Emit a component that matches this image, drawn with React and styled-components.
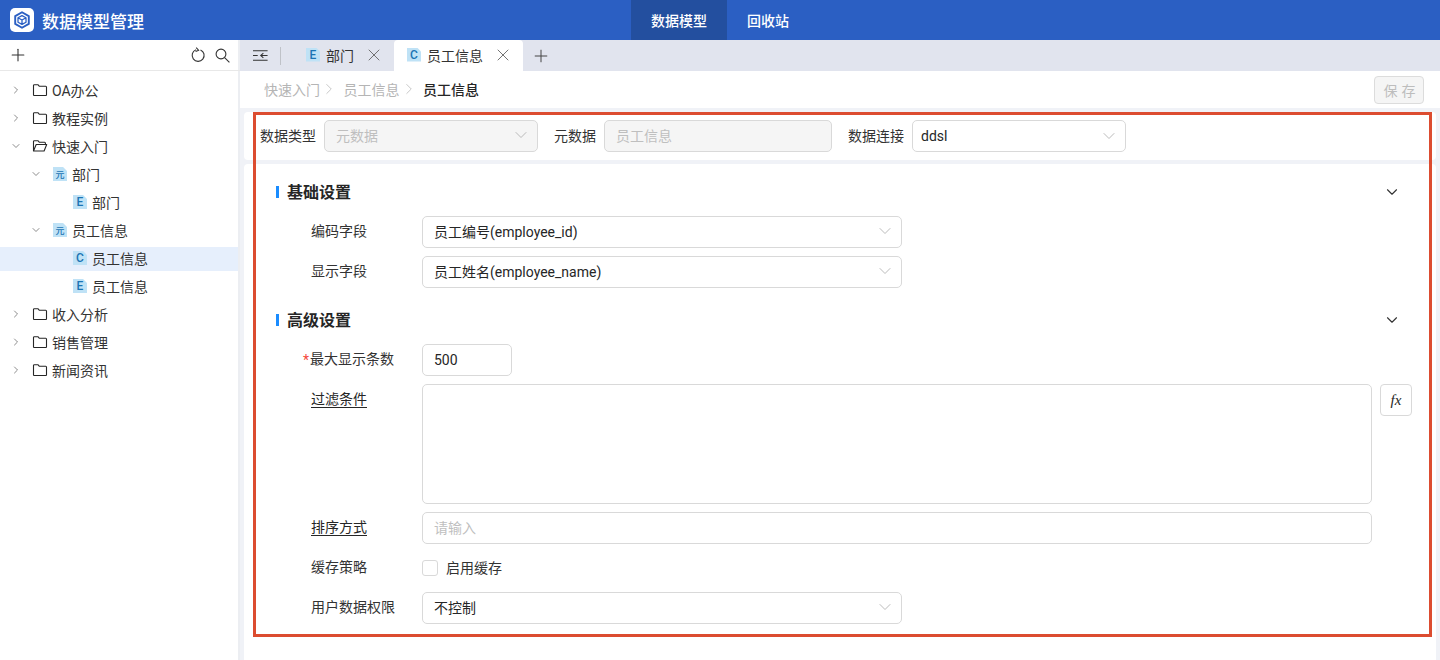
import React from "react";
import styled, { createGlobalStyle } from "styled-components";
import { ChevronDown, ChevronRight, Plus, X } from "lucide-react";

const GlobalStyle = createGlobalStyle`
  html, body { margin: 0; padding: 0; height: 100%; }
  body {
    background: #fff;
    color: #262626;
    font-family: Roboto, "Noto Sans CJK SC", "Noto Sans", sans-serif;
    font-size: 14px;
    overflow: hidden;
  }
  * { box-sizing: border-box; }
`;

const Page = styled.div`
  position: relative;
  width: 1440px;
  height: 660px;
  display: flex;
  flex-direction: column;
  overflow: hidden;
`;

const Header = styled.header`
  height: 40px;
  flex: none;
  display: grid;
  grid-template-columns: 631px auto 1fr;
  background: #2b5fc3;
  color: #fff;
`;

const Brand = styled.div`
  display: flex;
  align-items: center;
  gap: 8px;
  padding-left: 10px;
  font-size: 17px;
  font-weight: 500;
`;

const LogoBox = styled.span`
  width: 24px;
  height: 24px;
  border-radius: 5px;
  background: #fff;
  display: flex;
  align-items: center;
  justify-content: center;
`;

const Nav = styled.nav`
  display: flex;
`;

const NavItem = styled.a`
  width: ${(p) => (p.$active ? "96px" : "82px")};
  height: 40px;
  display: flex;
  align-items: center;
  justify-content: center;
  font-weight: 500;
  background: ${(p) => (p.$active ? "#234f9f" : "transparent")};
`;

const Body = styled.div`
  flex: 1;
  display: flex;
  min-height: 0;
`;

const Sidebar = styled.aside`
  width: 240px;
  flex: none;
  border-right: 2px solid #eceef2;
`;

const SideTools = styled.div`
  height: 31px;
  display: flex;
  align-items: center;
  padding: 0 10px 0 8px;
  border-bottom: 1px solid #e8e8e8;
  margin-right: -2px;
  color: #333;
`;

const Spacer = styled.span`
  flex: 1;
`;

const RefreshWrap = styled.span`
  display: flex;
  margin-right: 9px;
`;

const Tree = styled.ul`
  list-style: none;
  margin: 0;
  padding: 8px 0 0;
`;

const TreeRow = styled.li`
  height: 24px;
  margin-bottom: 4px;
  display: flex;
  align-items: center;
  padding-left: ${(p) => 10 + p.$level * 20}px;
  padding-bottom: 2px;
  background: ${(p) => (p.$selected ? "#e6effc" : "transparent")};
  color: #333;
`;

const Arrow = styled.span`
  width: 12px;
  height: 12px;
  margin-right: ${(p) => (p.$file ? 11 : 10)}px;
  flex: none;
  display: flex;
  align-items: center;
  justify-content: center;
  color: #666;
`;

const TreeLabel = styled.span`
  margin-left: ${(p) => (p.$file ? 5 : 4)}px;
  white-space: nowrap;
`;

const FileBadge = styled.span`
  width: 14px;
  height: 14px;
  flex: none;
  background: #bfe2f6;
  clip-path: polygon(0 0, 72% 0, 100% 28%, 100% 100%, 0 100%);
  color: #1b74b4;
  font-family: ${(p) => (p.$small ? '"Noto Sans CJK SC"' : "Roboto")}, sans-serif;
  font-size: ${(p) => (p.$small ? "9px" : "12px")};
  font-weight: 500;
  line-height: 15px;
  text-align: center;
`;

const Main = styled.main`
  flex: 1;
  min-width: 0;
  display: flex;
  flex-direction: column;
  background: #f0f2f7;
`;

const TabBar = styled.div`
  height: 31px;
  flex: none;
  display: flex;
  background: #e1e4ee;
`;

const Toggle = styled.div`
  width: 41px;
  display: flex;
  align-items: center;
  padding-left: 13px;
  &::after {
    content: "";
    width: 1px;
    height: 18px;
    background: #bfc2c8;
    margin-left: 12px;
  }
`;

const Tab = styled.div`
  height: 31px;
  width: ${(p) => (p.$active ? "129px" : "113px")};
  display: flex;
  align-items: center;
  padding-left: ${(p) => (p.$active ? "13px" : "25px")};
  padding-bottom: 2px;
  background: ${(p) => (p.$active ? "#fff" : "transparent")};
  border-radius: 4px 4px 0 0;
  color: #333;
`;

const TabText = styled.span`
  margin-left: 6px;
`;

const TabClose = styled.span`
  display: flex;
  margin-left: 10px;
  color: #666;
`;

const TabAdd = styled.div`
  width: 36px;
  display: flex;
  align-items: center;
  justify-content: center;
  color: #444;
`;

const Crumbs = styled.div`
  height: 37px;
  flex: none;
  display: flex;
  align-items: center;
  background: #fff;
  padding: 0 16px 0 24px;
`;

const Crumb = styled.span`
  display: flex;
  align-items: center;
  margin-right: 5.5px;
  padding-bottom: 2px;
  color: ${(p) => (p.$current ? "#262626" : "#b5b5b5")};
  font-weight: ${(p) => (p.$current ? 500 : 400)};
`;

const SaveButton = styled.button`
  margin-left: auto;
  width: 50px;
  height: 28px;
  padding: 0 0 0 5px;
  border: 1px solid #dcdcdc;
  border-radius: 4px;
  background: #f5f5f5;
  color: #bdbdbd;
  font: inherit;
  letter-spacing: 4px;
`;

const Panels = styled.div`
  flex: 1;
  display: flex;
  flex-direction: column;
  gap: 4px;
  padding: 4px 4px 0;
  min-height: 0;
`;

const TopPanel = styled.div`
  height: 48px;
  flex: none;
  background: #fff;
  border-radius: 4px;
  display: flex;
  align-items: center;
  gap: 8px;
  padding-left: 16px;
`;

const TopLabel = styled.label`
  margin-left: ${(p) => (p.$first ? 0 : 8)}px;
  padding-bottom: 2px;
  color: #333;
  white-space: nowrap;
`;

const FormPanel = styled.div`
  flex: 1;
  background: #fff;
  border-radius: 4px 4px 0 0;
  padding: 12px 24px 0 32px;
`;

const SectionHead = styled.div`
  height: 32px;
  display: flex;
  align-items: center;
  justify-content: space-between;
  padding-right: 11px;
  margin-bottom: 8px;
  margin-top: ${(p) => (p.$top ? 0 : 16)}px;
`;

const SectionTitle = styled.h3`
  margin: 0;
  font-size: 16px;
  font-weight: 600;
  line-height: 20px;
  color: #262626;
  display: flex;
  align-items: center;
  gap: 8px;
  &::before {
    content: "";
    width: 3px;
    height: 12px;
    background: #1a8cff;
  }
`;

const TitleText = styled.span`
  margin-top: 2px;
`;

const Row = styled.div`
  display: flex;
  align-items: ${(p) => (p.$top ? "flex-start" : "center")};
  min-height: 32px;
  margin-bottom: 8px;
`;

const FieldLabel = styled.div`
  position: relative;
  width: 146px;
  height: 32px;
  padding-left: ${(p) => (p.$required ? 34 : 35)}px;
  color: #333;
  line-height: 30px;
  flex: none;
  white-space: nowrap;
`;

const LabelText = styled.span`
  ${(p) => p.$link && "text-decoration: underline; text-underline-offset: 3px; color: #262626;"}
`;

const Required = styled.span`
  position: absolute;
  left: 27px;
  top: 1px;
  color: #f5483b;
`;

const Control = styled.div`
  width: ${(p) => p.$width}px;
  height: ${(p) => p.$height || 32}px;
  flex: none;
  display: flex;
  align-items: center;
  justify-content: space-between;
  padding: 0 ${(p) => (p.$caret ? 6 : 12)}px ${(p) => (p.$latin ? 0 : 2)}px ${(p) => p.$pad || 11}px;
  border: 1px solid #d9d9d9;
  border-radius: 5px;
  background: ${(p) => (p.$disabled ? "#f5f5f5" : "#fff")};
  color: ${(p) => (p.$disabled || p.$placeholder ? "#bfbfbf" : "#262626")};
  white-space: nowrap;
`;

const Caret = styled(ChevronDown)`
  color: #b3b3b3;
`;

const Box = styled.span`
  width: 16px;
  height: 16px;
  border: 1px solid #d9d9d9;
  border-radius: 3px;
  margin-right: 8px;
`;

const CheckLine = styled.div`
  display: flex;
  align-items: center;
  height: 32px;
  color: #333;
`;

const CheckText = styled.span`
  margin-bottom: 3px;
`;

const FxButton = styled.button`
  width: 32px;
  height: 32px;
  padding: 0;
  margin-left: 8px;
  border: 1px solid #d9d9d9;
  border-radius: 4px;
  background: #fff;
  font-family: "Liberation Serif", serif;
  font-style: italic;
  font-size: 15px;
  color: #262626;
`;

const Highlight = styled.div`
  position: absolute;
  left: 253px;
  top: 112px;
  width: 1179px;
  height: 525px;
  border: 3px solid #dc4c30;
  pointer-events: none;
`;

const FolderIcon = ({ open }) => (
  <svg width="16" height="16" viewBox="0 0 16 16" fill="none" stroke="#262626" strokeWidth="1.1" strokeLinejoin="round">
    {open ? (
      <path d="M1.5 13V3.5a.8.8 0 0 1 .8-.8h3.6l1.5 1.6h5.2a.8.8 0 0 1 .8.8v1.4M1.5 13h10.6l2.6-6.5H4.2L1.5 13z" />
    ) : (
      <path d="M1.5 3.5a.8.8 0 0 1 .8-.8h3.6l1.5 1.6h6.3a.8.8 0 0 1 .8.8v7.6a.8.8 0 0 1-.8.8H2.3a.8.8 0 0 1-.8-.8V3.5z" />
    )}
  </svg>
);

const CubeLogo = () => (
  <svg width="18" height="18" viewBox="0 0 18 18" fill="none" stroke="#2b5fc3" strokeWidth="1.9" strokeLinejoin="round">
    <path d="M9 1.2l6.8 3.9v7.8L9 16.8l-6.8-3.9V5.1L9 1.2z" />
    <path d="M5 6.8L9 4.6l4 2.2v4.4L9 13.4l-4-2.2V6.8zM5 6.8L9 9l4-2.2M9 9v4.4" strokeWidth="1.3" />
  </svg>
);

const RefreshIcon = () => (
  <svg width="16" height="16" viewBox="0 0 16 16" fill="none" stroke="#333" strokeWidth="1.1">
    <path d="M6 2.8a6 6 0 1 0 4.5.1" />
    <path d="M6.2 .6L8.6 3.2 5.6 4.6" />
  </svg>
);

const SearchIcon = () => (
  <svg width="15" height="15" viewBox="0 0 15 15" fill="none" stroke="#333" strokeWidth="1.1">
    <circle cx="6" cy="6" r="4.9" />
    <path d="M9.6 9.6L14.4 14.4" />
  </svg>
);

const ToggleIcon = () => (
  <svg width="16" height="13" viewBox="0 0 16 13" fill="none" stroke="#333" strokeWidth="1.1">
    <path d="M0 1.5h15.5M0 11.5h15.5M0 6.5h5M15.5 6.5H8.5M11 4l-2.8 2.5L11 9" />
  </svg>
);

const treeData = [
  { level: 0, type: "folder", label: "OA办公", arrow: "right" },
  { level: 0, type: "folder", label: "教程实例", arrow: "right" },
  { level: 0, type: "open", label: "快速入门", arrow: "down" },
  { level: 1, type: "元", label: "部门", arrow: "down" },
  { level: 2, type: "E", label: "部门" },
  { level: 1, type: "元", label: "员工信息", arrow: "down" },
  { level: 2, type: "C", label: "员工信息", selected: true },
  { level: 2, type: "E", label: "员工信息" },
  { level: 0, type: "folder", label: "收入分析", arrow: "right" },
  { level: 0, type: "folder", label: "销售管理", arrow: "right" },
  { level: 0, type: "folder", label: "新闻资讯", arrow: "right" },
];

const App = () => {
  return (
    <>
      <GlobalStyle />
      <Page>
        <Header>
          <Brand>
            <LogoBox>
              <CubeLogo />
            </LogoBox>
            数据模型管理
          </Brand>
          <Nav>
            <NavItem $active>数据模型</NavItem>
            <NavItem>回收站</NavItem>
          </Nav>
        </Header>
        <Body>
          <Sidebar>
            <SideTools>
              <Plus size={20} strokeWidth={1.3} />
              <Spacer />
              <RefreshWrap>
                <RefreshIcon />
              </RefreshWrap>
              <SearchIcon />
            </SideTools>
            <Tree>
              {treeData.map((item, i) => {
                const isFile = item.type !== "folder" && item.type !== "open";
                return (
                  <TreeRow key={i} $level={item.level} $selected={item.selected}>
                    <Arrow $file={isFile}>
                      {item.arrow === "right" && <ChevronRight size={14} strokeWidth={1.5} />}
                      {item.arrow === "down" && <ChevronDown size={14} strokeWidth={1.5} />}
                    </Arrow>
                    {item.type === "folder" && <FolderIcon />}
                    {item.type === "open" && <FolderIcon open />}
                    {isFile && <FileBadge $small={item.type === "元"}>{item.type}</FileBadge>}
                    <TreeLabel $file={isFile}>{item.label}</TreeLabel>
                  </TreeRow>
                );
              })}
            </Tree>
          </Sidebar>
          <Main>
            <TabBar>
              <Toggle>
                <ToggleIcon />
              </Toggle>
              <Tab>
                <FileBadge>E</FileBadge>
                <TabText>部门</TabText>
                <TabClose>
                  <X size={20} strokeWidth={1.1} />
                </TabClose>
              </Tab>
              <Tab $active>
                <FileBadge>C</FileBadge>
                <TabText>员工信息</TabText>
                <TabClose>
                  <X size={20} strokeWidth={1.1} />
                </TabClose>
              </Tab>
              <TabAdd>
                <Plus size={20} strokeWidth={1.2} />
              </TabAdd>
            </TabBar>
            <Crumbs>
              <Crumb>
                快速入门
                <ChevronRight size={18} strokeWidth={1} />
              </Crumb>
              <Crumb>
                员工信息
                <ChevronRight size={18} strokeWidth={1} />
              </Crumb>
              <Crumb $current>员工信息</Crumb>
              <SaveButton disabled>保存</SaveButton>
            </Crumbs>
            <Panels>
              <TopPanel>
                <TopLabel $first>数据类型</TopLabel>
                <Control $width={214} $disabled $caret>
                  元数据
                  <Caret size={20} strokeWidth={1.1} />
                </Control>
                <TopLabel>元数据</TopLabel>
                <Control $width={228} $disabled>
                  员工信息
                </Control>
                <TopLabel>数据连接</TopLabel>
                <Control $width={214} $pad={8} $caret $latin>
                  ddsl
                  <Caret size={20} strokeWidth={1.1} />
                </Control>
              </TopPanel>
              <FormPanel>
                <SectionHead $top>
                  <SectionTitle>
                    <TitleText>基础设置</TitleText>
                  </SectionTitle>
                  <ChevronDown size={18} strokeWidth={1.5} color="#333" />
                </SectionHead>
                <Row>
                  <FieldLabel>编码字段</FieldLabel>
                  <Control $width={480} $caret>
                    员工编号(employee_id)
                    <Caret size={20} strokeWidth={1.1} />
                  </Control>
                </Row>
                <Row>
                  <FieldLabel>显示字段</FieldLabel>
                  <Control $width={480} $caret>
                    员工姓名(employee_name)
                    <Caret size={20} strokeWidth={1.1} />
                  </Control>
                </Row>
                <SectionHead>
                  <SectionTitle>
                    <TitleText>高级设置</TitleText>
                  </SectionTitle>
                  <ChevronDown size={18} strokeWidth={1.5} color="#333" />
                </SectionHead>
                <Row>
                  <FieldLabel $required>
                    <Required>*</Required>
                    最大显示条数
                  </FieldLabel>
                  <Control $width={90} $latin>500</Control>
                </Row>
                <Row $top>
                  <FieldLabel>
                    <LabelText $link>过滤条件</LabelText>
                  </FieldLabel>
                  <Control $width={950} $height={120} />
                  <FxButton>fx</FxButton>
                </Row>
                <Row>
                  <FieldLabel>
                    <LabelText $link>排序方式</LabelText>
                  </FieldLabel>
                  <Control $width={950} $placeholder>
                    请输入
                  </Control>
                </Row>
                <Row>
                  <FieldLabel>缓存策略</FieldLabel>
                  <CheckLine>
                    <Box />
                    <CheckText>启用缓存</CheckText>
                  </CheckLine>
                </Row>
                <Row>
                  <FieldLabel>用户数据权限</FieldLabel>
                  <Control $width={480} $caret>
                    不控制
                    <Caret size={20} strokeWidth={1.1} />
                  </Control>
                </Row>
              </FormPanel>
            </Panels>
          </Main>
        </Body>
        <Highlight />
      </Page>
    </>
  );
};

export default App;
